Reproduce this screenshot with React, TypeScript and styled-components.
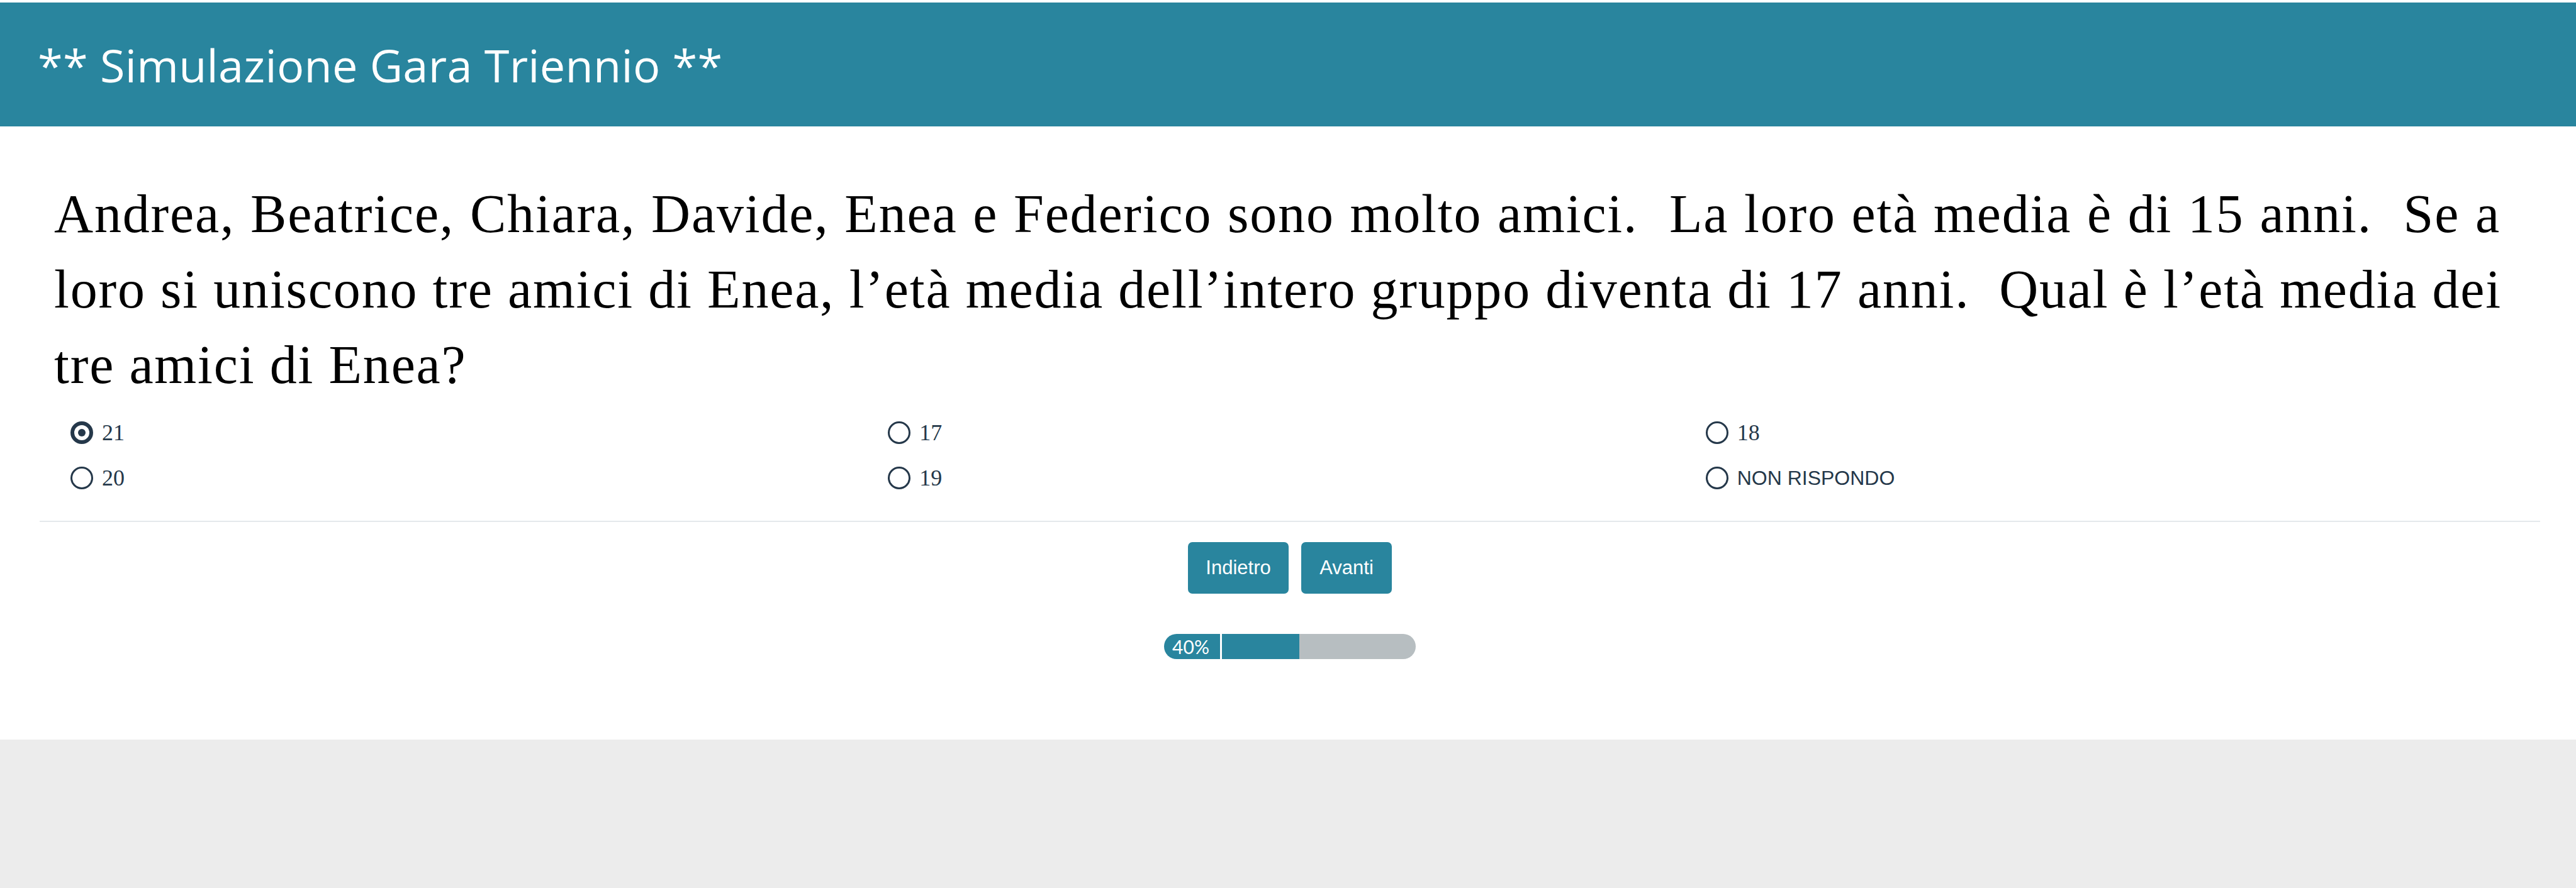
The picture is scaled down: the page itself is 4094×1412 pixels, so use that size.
import React, { useState } from "react";
import styled, { createGlobalStyle } from "styled-components";

const Global = createGlobalStyle`
  html, body { margin: 0; padding: 0; }
  body { background: #ececec; font-family: "Liberation Sans", Arial, sans-serif; }
`;

const Page = styled.div`
  background: #ffffff;
  padding-top: 4px;
`;

const Header = styled.header`
  height: 197px;
  background: #29859e;
  display: flex;
  align-items: center;
  padding-left: 60px;
`;

const Title = styled.h1`
  margin: 0;
  font-family: "Open Sans", sans-serif;
  font-weight: 400;
  font-size: 72px;
  color: #ffffff;
  letter-spacing: 0.3px;
`;

const Main = styled.main`
  padding: 79px 57px 128px 63px;
  display: flex;
  flex-direction: column;
`;

const Question = styled.div`
  margin: 0 63px 0 23px;
  font-family: "Liberation Serif", "Times New Roman", serif;
  font-size: 86px;
  line-height: 120px;
  letter-spacing: 1.8px;
  color: #000000;
`;

const Line = styled.span<{ $last?: boolean }>`
  display: block;
  white-space: pre;
  text-align: ${(p) => (p.$last ? "left" : "justify")};
  text-align-last: ${(p) => (p.$last ? "left" : "justify")};
`;

const Options = styled.div`
  margin: 12px 53px 0 23px;
  display: grid;
  grid-template-columns: repeat(3, 1fr);
  grid-auto-rows: 72px;
`;

const Option = styled.label`
  display: flex;
  align-items: center;
  gap: 14px;
  padding-left: 26px;
  cursor: pointer;
`;

const Radio = styled.span<{ $checked: boolean }>`
  box-sizing: border-box;
  width: 36px;
  height: 36px;
  border-radius: 50%;
  border: ${(p) => (p.$checked ? "6px" : "3.5px")} solid #25384a;
  display: flex;
  align-items: center;
  justify-content: center;
  &::after {
    content: "";
    width: 12px;
    height: 12px;
    border-radius: 50%;
    background: #25384a;
    display: ${(p) => (p.$checked ? "block" : "none")};
  }
`;

const OptText = styled.span<{ $sans?: boolean }>`
  font-family: ${(p) =>
    p.$sans ? `"Liberation Sans", Arial, sans-serif` : `"Liberation Serif", "Times New Roman", serif`};
  font-size: ${(p) => (p.$sans ? "32px" : "36px")};
  color: #25384a;
  line-height: 1;
`;

const Rule = styled.hr`
  margin: 32px 0 0 0;
  border: none;
  height: 2px;
  background: #e4e8ec;
`;

const Buttons = styled.div`
  margin-top: 32px;
  display: flex;
  justify-content: center;
  gap: 20px;
`;

const Button = styled.button<{ $w: number }>`
  width: ${(p) => p.$w}px;
  height: 82px;
  border: none;
  border-radius: 7px;
  background: #29859e;
  color: #ffffff;
  font-family: "Liberation Sans", Arial, sans-serif;
  font-size: 31px;
  cursor: pointer;
`;

const ProgressWrap = styled.div`
  margin-top: 64px;
  display: flex;
  justify-content: center;
  gap: 3px;
`;

const ProgressLabel = styled.div`
  width: 89px;
  height: 40px;
  border-radius: 20px 0 0 20px;
  background: #29859e;
  color: #ffffff;
  font-family: Lato, "Open Sans", sans-serif;
  font-size: 30px;
  display: flex;
  align-items: center;
  justify-content: center;
  box-sizing: border-box;
  padding-right: 4px;
`;

const Track = styled.div`
  width: 308px;
  height: 40px;
  border-radius: 0 20px 20px 0;
  background: #b7bec1;
  overflow: hidden;
`;

const Fill = styled.div`
  height: 100%;
  background: #29859e;
`;

const options = [
  { v: "21" },
  { v: "17" },
  { v: "18" },
  { v: "20" },
  { v: "19" },
  { v: "NON RISPONDO", sans: true },
];

export default function App() {
  const [sel, setSel] = useState("21");
  const pct = 40;
  return (
    <>
      <Global />
      <Page>
        <Header>
          <Title>** Simulazione Gara Triennio **</Title>
        </Header>
        <Main>
          <Question>
            <Line>Andrea, Beatrice, Chiara, Davide, Enea e Federico sono molto amici.  La loro età media è di 15 anni.  Se a</Line>
            <Line>loro si uniscono tre amici di Enea, l’età media dell’intero gruppo diventa di 17 anni.  Qual è l’età media dei</Line>
            <Line $last>tre amici di Enea?</Line>
          </Question>
          <Options>
            {options.map((o) => (
              <Option key={o.v} onClick={() => setSel(o.v)}>
                <Radio $checked={sel === o.v} />
                <OptText $sans={o.sans}>{o.v}</OptText>
              </Option>
            ))}
          </Options>
          <Rule />
          <Buttons>
            <Button $w={160}>Indietro</Button>
            <Button $w={144}>Avanti</Button>
          </Buttons>
          <ProgressWrap>
            <ProgressLabel>{pct}%</ProgressLabel>
            <Track>
              <Fill style={{ width: `${pct}%` }} />
            </Track>
          </ProgressWrap>
        </Main>
      </Page>
    </>
  );
}
